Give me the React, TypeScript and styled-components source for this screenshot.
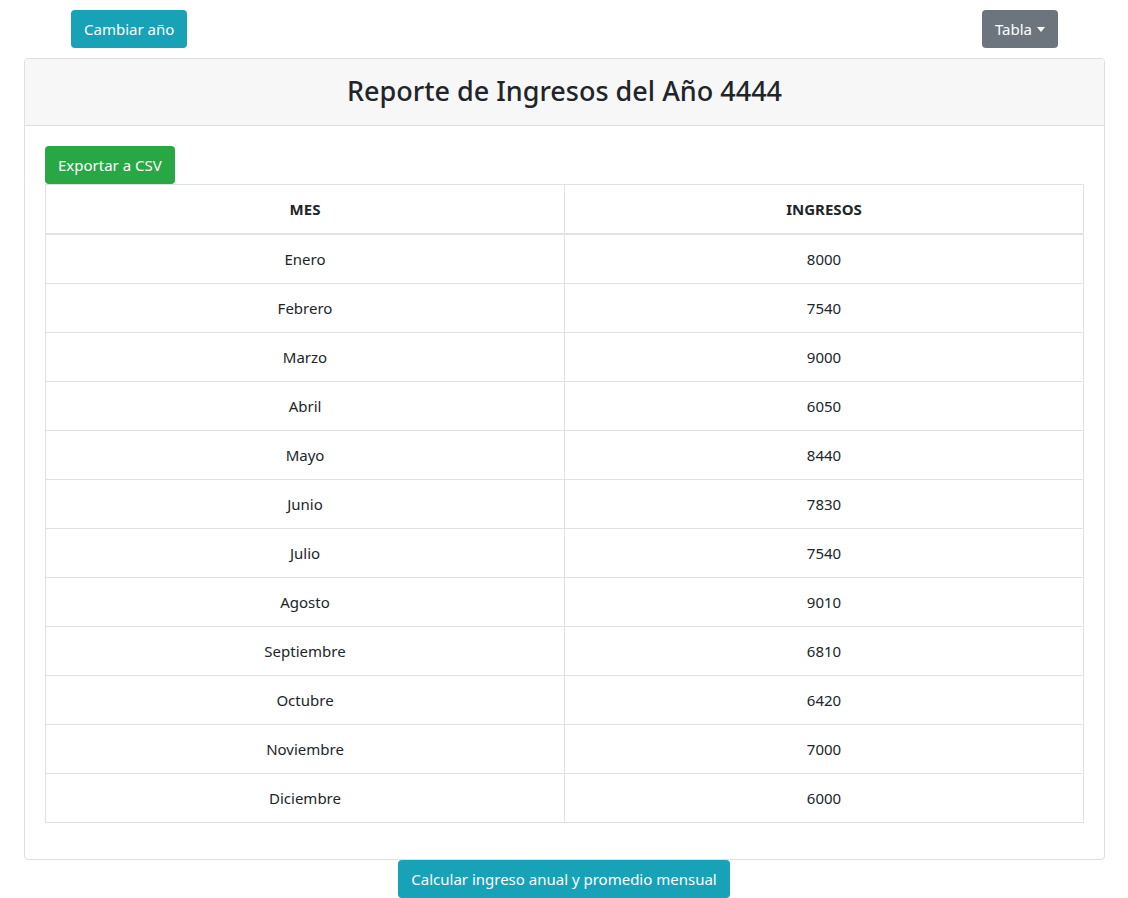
import React from 'react';
import styled, { createGlobalStyle } from 'styled-components';

const GlobalStyle = createGlobalStyle`
    * {
        box-sizing: border-box;
    }

    body {
        margin: 0;
        font-family: "Noto Sans", "Open Sans", sans-serif;
        font-size: 16px;
        line-height: 1.5;
        color: #212529;
        background: #fff;
    }
`;

const Page = styled.div`
    padding-top: 10px;
`;

const TopBar = styled.div`
    display: flex;
    justify-content: space-between;
    padding: 0 70px 0 71px;
`;

const Button = styled.button<{ $variant: 'info' | 'secondary' | 'success' }>`
    display: inline-flex;
    align-items: center;
    height: 38px;
    padding: 0 12px;
    border: 1px solid transparent;
    border-radius: 4px;
    font-family: inherit;
    font-size: 15px;
    color: #fff;
    cursor: pointer;
    background: ${({ $variant }) =>
        $variant === 'info' ? '#17a2b8' : $variant === 'secondary' ? '#6c757d' : '#28a745'};
`;

const Caret = styled.span`
    display: inline-block;
    margin-left: 5px;
    border-top: 5px solid #fff;
    border-left: 4.5px solid transparent;
    border-right: 4.5px solid transparent;
`;

const Card = styled.div`
    margin: 10px 23px 0 24px;
    border: 1px solid #dfdfdf;
    border-radius: 4px;
`;

const CardHeader = styled.div`
    height: 67px;
    display: flex;
    align-items: center;
    justify-content: center;
    background: #f7f7f7;
    border-bottom: 1px solid #dfdfdf;
    border-radius: 4px 4px 0 0;
`;

const Title = styled.h3`
    margin: 0 0 2px;
    font-size: 27px;
    font-weight: 500;
    color: #212529;
`;

const CardBody = styled.div`
    padding: 20px 20px 36px;
`;

const Table = styled.table`
    width: 100%;
    border-collapse: collapse;
    text-align: center;
    font-size: 15px;

    th, td {
        border: 1px solid #dee2e6;
        width: 50%;
        height: 49px;
        padding: 0 12px;
    }

    tbody tr:first-child td {
        height: 50px;
    }

    th {
        font-weight: 700;
        border-bottom-width: 2px;
    }
`;

const Footer = styled.div`
    display: flex;
    justify-content: center;
`;

const data: [string, number][] = [
    ['Enero', 8000],
    ['Febrero', 7540],
    ['Marzo', 9000],
    ['Abril', 6050],
    ['Mayo', 8440],
    ['Junio', 7830],
    ['Julio', 7540],
    ['Agosto', 9010],
    ['Septiembre', 6810],
    ['Octubre', 6420],
    ['Noviembre', 7000],
    ['Diciembre', 6000],
];

export default function App() {
    return (
        <Page>
            <GlobalStyle />
            <TopBar>
                <Button $variant="info">Cambiar año</Button>
                <Button $variant="secondary">
                    Tabla
                    <Caret />
                </Button>
            </TopBar>
            <Card>
                <CardHeader>
                    <Title>Reporte de Ingresos del Año 4444</Title>
                </CardHeader>
                <CardBody>
                    <Button $variant="success">Exportar a CSV</Button>
                    <Table>
                        <thead>
                            <tr>
                                <th>MES</th>
                                <th>INGRESOS</th>
                            </tr>
                        </thead>
                        <tbody>
                            {data.map(([mes, ingreso]) => (
                                <tr key={mes}>
                                    <td>{mes}</td>
                                    <td>{ingreso}</td>
                                </tr>
                            ))}
                        </tbody>
                    </Table>
                </CardBody>
            </Card>
            <Footer>
                <Button $variant="info">Calcular ingreso anual y promedio mensual</Button>
            </Footer>
        </Page>
    );
}
